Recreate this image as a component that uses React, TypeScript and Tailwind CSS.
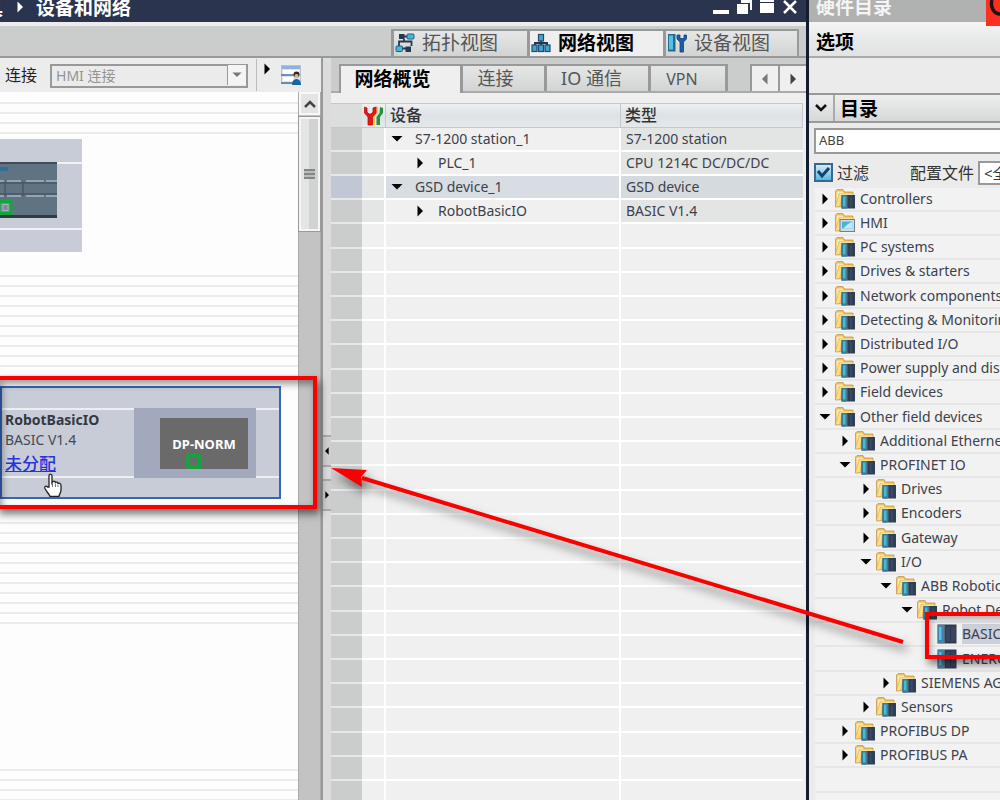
import React from "react";

type Kind = "folder" | "hmi" | "module";
type Node = { level: number; label: string; open?: boolean; kind?: Kind; selected?: boolean };

const INDENT = ["pl-0", "pl-[20px]", "pl-[41px]", "pl-[61px]", "pl-[82px]", "pl-[102px]"];

const TREE: Node[] = [
  { level: 0, label: "Controllers" },
  { level: 0, label: "HMI", kind: "hmi" },
  { level: 0, label: "PC systems" },
  { level: 0, label: "Drives & starters" },
  { level: 0, label: "Network components" },
  { level: 0, label: "Detecting & Monitoring" },
  { level: 0, label: "Distributed I/O" },
  { level: 0, label: "Power supply and distribution" },
  { level: 0, label: "Field devices" },
  { level: 0, label: "Other field devices", open: true },
  { level: 1, label: "Additional Ethernet devices" },
  { level: 1, label: "PROFINET IO", open: true },
  { level: 2, label: "Drives" },
  { level: 2, label: "Encoders" },
  { level: 2, label: "Gateway" },
  { level: 2, label: "I/O", open: true },
  { level: 3, label: "ABB Robotics", open: true },
  { level: 4, label: "Robot Device", open: true },
  { level: 5, label: "BASIC V1.4", kind: "module", selected: true },
  { level: 5, label: "ENERGY", kind: "module" },
  { level: 3, label: "SIEMENS AG" },
  { level: 2, label: "Sensors" },
  { level: 1, label: "PROFIBUS DP" },
  { level: 1, label: "PROFIBUS PA" },
];

const DEVICES = [
  { name: "S7-1200 station_1", type: "S7-1200 station", open: true, child: false, selected: false },
  { name: "PLC_1", type: "CPU 1214C DC/DC/DC", open: false, child: true, selected: false },
  { name: "GSD device_1", type: "GSD device", open: true, child: false, selected: true },
  { name: "RobotBasicIO", type: "BASIC V1.4", open: false, child: true, selected: false },
];

function Triangle({ open, className = "h-3 w-3" }: { open?: boolean; className?: string }) {
  return (
    <svg viewBox="0 0 12 12" className={"shrink-0 " + className} fill="currentColor" aria-hidden="true">
      {open ? <path d="M0.5 3h11L6 8.5z" /> : <path d="M3.5 0.5L9 6l-5.5 5.5z" />}
    </svg>
  );
}

function NodeIcon({ kind = "folder" }: { kind?: Kind }) {
  if (kind === "module") {
    return (
      <svg viewBox="0 0 20 20" className="h-5 w-5 shrink-0" aria-hidden="true">
        <rect x="0.5" y="0.5" width="19" height="19" fill="#2f3d52" />
        <rect x="1" y="1" width="5.5" height="18" fill="#4482a8" />
        <rect x="2" y="3" width="2.5" height="13" fill="#55c0ea" />
        <rect x="6.5" y="1" width="1" height="18" fill="#8595a5" />
        <rect x="9" y="3" width="9.5" height="14" fill="#38475c" />
        <rect x="13" y="3" width="1" height="14" fill="#2a374c" />
      </svg>
    );
  }
  return (
    <svg viewBox="0 0 20 20" className="h-5 w-5 shrink-0" aria-hidden="true">
      <path d="M0.5 2L2 0.5h6L9.5 3H18v14L0.5 18z" fill="#e9bf62" stroke="#c49a4c" strokeWidth="0.8" />
      <path d="M5 4.500h12.500V9H6l-1.500 8-3.500 0.500L4 7z" fill="#fbdf8c" />
      <path d="M1.500 2.500h6l1 1.500H4L1.500 12z" fill="#fdeab0" />
      {kind === "hmi" ? (
        <>
          <rect x="5" y="6.500" width="14.500" height="12" fill="#d3dbe2" stroke="#6e7f90" />
          <rect x="7" y="8.500" width="10.500" height="7" fill="#46b4dc" />
          <path d="M8 15.500l5-4.500 4.500-2.500v7z" fill="#bfeaf8" />
        </>
      ) : (
        <>
          <rect x="6.500" y="6" width="13.500" height="13.500" fill="#2f3f55" />
          <rect x="6.500" y="6" width="5" height="13.500" fill="#2f7f9c" />
          <rect x="8" y="7.500" width="2.500" height="10" fill="#45bcd8" />
          <rect x="11.500" y="6.500" width="0.800" height="12.500" fill="#7c90a3" />
          <rect x="15.500" y="8" width="0.800" height="10" fill="#4c5e74" />
        </>
      )}
    </svg>
  );
}

function TopologyIcon() {
  return (
    <svg viewBox="0 0 20 20" className="h-5 w-5 shrink-0" aria-hidden="true">
      <path d="M12 3.500H8M9 6v2.500h7.500V13M4 13V8.500h5M8 15.500h4" fill="none" stroke="#26384f" strokeWidth="1.800" />
      <rect x="4" y="1" width="5.500" height="5" fill="#26384f" />
      <rect x="12" y="1" width="7" height="5" rx="1" fill="#45b8e0" stroke="#2c5876" />
      <rect x="1" y="13" width="6.500" height="5.500" rx="1" fill="#45b8e0" stroke="#2c5876" />
      <rect x="10.500" y="13.500" width="5.500" height="5.500" fill="#26384f" />
    </svg>
  );
}

function NetworkIcon() {
  return (
    <svg viewBox="0 0 20 20" className="h-5 w-5 shrink-0" aria-hidden="true">
      <path d="M10 6v7M4 13v-3h12v3" fill="none" stroke="#233850" strokeWidth="2" />
      <g fill="#3fa6d2" stroke="#234a68" strokeWidth="1.200">
        <rect x="7.500" y="1.500" width="5" height="6.500" />
        <rect x="1" y="12" width="5" height="6.500" />
        <rect x="7.500" y="12" width="5" height="6.500" />
        <rect x="14" y="12" width="5" height="6.500" />
      </g>
    </svg>
  );
}

function DeviceIcon() {
  return (
    <svg viewBox="0 0 20 20" className="h-5 w-5 shrink-0" aria-hidden="true">
      <rect x="1" y="1" width="7.500" height="17.500" fill="#2b6a8c" />
      <rect x="2" y="2.500" width="4" height="14" fill="#4fc4e4" />
      <path d="M10 2v4l3 3v10h3.500V9L19.500 6V2h-2.500v3.500h-4V2z" fill="#1d5caa" stroke="#173f78" strokeWidth="0.800" />
    </svg>
  );
}

function ToolsIcon() {
  return (
    <svg viewBox="0 0 20 20" className="mx-auto h-5 w-5" aria-hidden="true">
      <path d="M11 1l3-0.500v6l-3 4v8.500H8.500V9z" fill="#f0c94a" />
      <path d="M16 1l3 1v5l-3 4v8h-3.500v-8l3-4z" fill="#23913f" />
      <path d="M0.500 1v6L4 11v8h4.500v-8l3.500-4V1L9 2v4L7 8H5L3 6V2z" fill="#e01818" stroke="#c01010" strokeWidth="0.800" />
    </svg>
  );
}

const viewTab = "flex h-[27px] w-[136px] items-center gap-[7px] border-t-2 border-l-3 border-[#999] pb-[2px] pl-px text-[19px] leading-6";
const subTab = "border-t-2 border-r-3 border-[#999] pb-[2px] text-[18px] leading-6";
const inactive = "bg-linear-to-b from-[#e6e6e6] via-[#dcdede] to-[#d2d4d4] text-[#555]";

function TitleBar() {
  return (
    <header className="flex h-[22px] shrink-0 items-start overflow-hidden bg-[#2a344e] text-white">
      <span className="-ml-4 text-[19px] leading-4 font-bold">具</span>
      <Triangle className="mt-px ml-[11px] h-3 w-3" />
      <h1 className="ml-[10px] flex-1 text-[19px] leading-4 font-bold">设备和网络</h1>
      <div className="flex items-center gap-[7px] pr-2">
        <button aria-label="最小化" className="flex h-4 w-4 items-end"><span className="mb-[2px] h-1 w-full bg-white" /></button>
        <button aria-label="还原">
          <svg viewBox="0 0 16 16" className="h-4 w-4" fill="white"><path d="M5 0h11v10h-2V3H5z" /><rect x="1" y="4" width="11" height="10" /></svg>
        </button>
        <button aria-label="最大化">
          <svg viewBox="0 0 16 16" className="h-4 w-4" fill="white"><rect x="1" y="0" width="14" height="2" /><rect x="1" y="3" width="14" height="10" /></svg>
        </button>
        <button aria-label="关闭">
          <svg viewBox="0 0 16 16" className="h-4 w-4" stroke="white" strokeWidth="2.500"><path d="M2 1l12 12M14 1L2 13" /></svg>
        </button>
      </div>
    </header>
  );
}

function ViewTabs() {
  return (
    <nav className="flex h-9 shrink-0 items-end justify-end border-t-4 border-b-2 border-t-[#ececec] border-b-[#999] bg-[#cbcdcc] pr-[7px]">
      <button className={viewTab + " " + inactive}><TopologyIcon />拓扑视图</button>
      <button className={viewTab + " bg-[#efefef] font-bold text-black"}><NetworkIcon />网络视图</button>
      <button className={viewTab + " border-r-2 " + inactive}><DeviceIcon />设备视图</button>
    </nav>
  );
}

function Lines({ className }: { className: string }) {
  return <div className={"shrink-0 bg-[repeating-linear-gradient(to_bottom,transparent_0_8px,#ebebeb_8px_10px)] " + className} />;
}

function Canvas() {
  return (
    <div className="relative flex min-w-0 flex-1 flex-col overflow-hidden bg-[#fdfdfd]">
      <Lines className="mt-[2px] h-10" />
      <Lines className="mt-[133px] h-[110px]" />
      <Lines className="mt-[137px] h-[112px]" />
      <Lines className="mt-[135px] h-20" />

      <section aria-label="PLC_1" className="absolute top-[47px] left-0 h-[113px] w-[82px] bg-[#c8ccd7]">
        <div className="mt-[23px] h-[68px] border-y-2 border-[#f0f2f4]">
          <svg viewBox="0 0 57 56" className="-mt-[2px] h-[56px] w-[57px]" aria-hidden="true">
            <rect width="57" height="56" fill="#5f7382" />
            <rect width="57" height="2" fill="#414c59" />
            <rect y="53" width="57" height="3" fill="#303a44" />
            <path d="M0 5h9l-2 4H0z" fill="#2f7190" />
            <path d="M0 19h4M7 19h14M26 19h18M46 19h11M0 34h4M7 34h14M26 34h18M46 34h11" stroke="#a8b5bf" strokeWidth="1.500" />
            <path d="M0 21h57M0 32h57M5 20v14M23 20v14" stroke="#4a5865" strokeWidth="1.500" />
            <rect x="-1" y="39.500" width="12" height="12" fill="#7b8994" stroke="#0fa83f" strokeWidth="3" />
            <rect x="3" y="42.500" width="5" height="6" fill="none" stroke="#a9b4bc" />
          </svg>
        </div>
      </section>

      <section aria-label="RobotBasicIO" className="absolute top-[294px] left-0 h-[113px] w-[281px] border-2 border-[#3566bd] bg-[#c8ccd7]">
        <div className="mt-5 flex h-[70px] border-y-2 border-[#eceef2]">
          <div className="w-[132px] pl-[3px] text-[14px] leading-5">
            <h2 className="font-bold text-[#333942]">RobotBasicIO</h2>
            <p className="text-[#444a55]">BASIC V1.4</p>
            <a href="#assign" className="block text-[17px] leading-7 font-medium text-[#2735d8] underline">未分配</a>
          </div>
          <div className="-mt-[2px] flex h-[70px] w-[122px] items-center justify-end bg-[#a2a9bd] pr-2">
            <div className="flex h-[51px] w-[88px] flex-col items-center bg-[#6a6a6a] pt-4">
              <span className="text-[13px] leading-5 font-bold text-white">DP-NORM</span>
              <span className="mr-5 h-4 w-4 rounded-sm border-4 border-[#12a53d]" />
            </div>
          </div>
        </div>
      </section>

      <svg viewBox="0 0 20 24" className="absolute top-[381px] left-[43px] h-6 w-5" aria-hidden="true">
        <path d="M6 14V3c0-2.500 3-2.500 3 0v7l1-1.500c1-.8 2.500 0 2.500 1 1-.8 2.500-.3 2.500 1 1.300-.6 3 0 3 2v5c0 2-1.500 3-2 6H7c-.5-2-3-4-5-8-1-2.500 1.500-3 2.500-1.500z" fill="white" stroke="#222" strokeWidth="1.300" />
        <path d="M9.500 10v4M12.500 11v3M15 12v2" stroke="#777" />
      </svg>
    </div>
  );
}

function ScrollBar() {
  return (
    <div className="flex w-[23px] shrink-0 flex-col border-x border-[#aaa] bg-[#c3c3c3]">
      <button aria-label="向上滚动" className="flex h-[23px] items-center justify-center border-2 border-[#f8f8f8] bg-[#e4e4e4]">
        <svg viewBox="0 0 12 8" className="h-2 w-3" fill="none" stroke="#444" strokeWidth="2.500"><path d="M1 7l5-5 5 5" /></svg>
      </button>
      <div className="mt-[2px] flex h-[114px] items-center justify-center border-2 border-[#f5f5f5] bg-linear-to-r from-[#e4e5e5] from-50% to-[#d1d3d3] to-50% outline outline-[#999]">
        <div className="h-[10px] w-[11px] bg-[repeating-linear-gradient(to_bottom,#858585_0_2px,#bcbcbc_2px_4px)]" />
      </div>
    </div>
  );
}

function NetworkPane() {
  return (
    <section className="flex w-[321px] shrink-0 flex-col">
      <div className="flex h-[34px] shrink-0 items-center bg-[#ececec] pl-[5px]">
        <label htmlFor="connection" className="text-[16px] leading-6 text-[#222]">连接</label>
        <div className="relative ml-[13px] h-6 w-[198px]">
          <select id="connection" disabled className="h-6 w-full appearance-none border-2 border-[#999] bg-[#ebebeb] pl-1 text-[14px] leading-5 text-[#949494] opacity-100">
            <option>HMI 连接</option>
          </select>
          <span className="pointer-events-none absolute inset-y-[2px] right-[2px] flex w-[19px] items-center justify-center border-l border-[#999] bg-[#f4f4f4] text-[#777]">
            <Triangle open className="h-[10px] w-[10px]" />
          </span>
        </div>
        <div className="ml-2 h-8 w-px bg-[#bbb]" />
        <Triangle className="mb-3 ml-1 h-3 w-3" />
        <button aria-label="显示概览" className="ml-2">
          <svg viewBox="0 0 20 20" className="h-5 w-5">
            <rect x="0.500" y="0.500" width="19" height="18" fill="#dce5ef" stroke="#b4c3d4" />
            <rect x="1" y="1" width="18" height="3" fill="#8fb0d8" />
            <rect x="2" y="5" width="16" height="4" fill="#fff" />
            <rect x="2" y="12" width="10" height="4" fill="#fff" />
            <path d="M0 10h13M0 18h13" stroke="#5271a0" strokeWidth="1.500" />
            <circle cx="15.500" cy="9.500" r="3" fill="#32281e" />
            <circle cx="15.500" cy="11" r="2" fill="#e3b184" />
            <path d="M11 20c0-8 9-8 9 0z" fill="#17669f" />
          </svg>
        </button>
      </div>
      <div className="flex min-h-0 flex-1">
        <Canvas />
        <ScrollBar />
      </div>
    </section>
  );
}

function Splitter() {
  return (
    <div className="flex w-[10px] shrink-0 flex-col items-center border-l-2 border-[#999] bg-[#dcdcdc] pt-[377px]">
      <button aria-label="向左折叠" className="flex h-8 w-full items-center justify-center border-y-2 border-[#aaa] bg-[#d0d0d0]">
        <Triangle className="h-2 w-2 rotate-180" />
      </button>
      <button aria-label="向右折叠" className="mt-3 flex h-8 w-full items-center justify-center border-y-2 border-[#aaa] bg-[#d0d0d0]">
        <Triangle className="h-2 w-2" />
      </button>
    </div>
  );
}

function OverviewPane() {
  return (
    <section className="flex min-w-0 flex-1 flex-col overflow-hidden bg-[#efefef]">
      <nav className="flex h-[35px] shrink-0 items-end border-b-2 border-[#aaa] bg-[#cbcdcc] pl-2">
        <button className={subTab + " -mb-[2px] h-[29px] w-[124px] border-l-2 bg-[#efefef] pr-4 font-bold text-black"}><span className="text-[19px]">网络概览</span></button>
        <button className={subTab + " h-[27px] w-[84px] pr-4 " + inactive}>连接</button>
        <button className={subTab + " h-[27px] w-[104px] pr-3 " + inactive}>IO 通信</button>
        <button className={subTab + " h-[27px] w-[77px] pr-3 " + inactive}><span className="text-[16px]">VPN</span></button>
        <div className="flex-1" />
        <button aria-label="上一个选项卡" className="flex h-[27px] w-7 items-center justify-center border-t-2 border-l-2 border-[#999] bg-[#efefef] text-[#777]"><Triangle className="h-3 w-3 rotate-180" /></button>
        <button aria-label="下一个选项卡" className="flex h-[27px] w-7 items-center justify-center border-t-2 border-l-2 border-[#999] bg-[#efefef] text-[#444]"><Triangle /></button>
      </nav>
      <div className="mt-[10px] pr-[3px]">
        <table className="w-full table-fixed border-separate border-spacing-0 text-left text-[14px] text-[#3c414c]">
          <colgroup>
            <col className="w-[31px]" />
            <col className="w-6" />
            <col className="w-[235px]" />
            <col />
          </colgroup>
          <thead>
            <tr className="h-[25px] bg-linear-to-b from-[#f0f1f2] via-[#dde2e7] to-[#e5e9ec]">
              <th aria-label="行" className="border-y border-[#c4c8cc] bg-[#dcdede]" />
              <th aria-label="状态" className="border-y border-r border-[#c4c8cc] p-0"><ToolsIcon /></th>
              <th className="border-y border-r border-[#c4c8cc] p-0 pb-[2px] pl-1 text-[16px] leading-5 font-medium text-[#333]">设备</th>
              <th className="border-y border-r border-[#c4c8cc] p-0 pb-[2px] pl-1 text-[16px] leading-5 font-medium text-[#333]">类型</th>
            </tr>
          </thead>
          <tbody>
            {DEVICES.map((d) => (
              <tr key={d.name} className="h-6">
                <td className={"border-b-2 border-[#e6e8e8] p-0 " + (d.selected ? "bg-[#c1c7d4]" : "bg-[#cbcdcc]")} />
                <td className="border-r-2 border-b-2 border-white bg-[#e4e6e5] p-0" />
                <td className={"border-r-2 border-b-2 border-white p-0 leading-5 " + (d.selected ? "bg-[#d8dde3]" : "bg-[#f0f0f0]")}>
                  <div className={"flex items-center gap-3 " + (d.child ? "pl-7" : "pl-[5px]")}>
                    <button aria-label={d.open ? "折叠" : "展开"} className="text-black"><Triangle open={d.open} /></button>
                    {d.name}
                  </div>
                </td>
                <td className={"border-b-2 border-white p-0 pl-[5px] leading-5 " + (d.selected ? "bg-[#d5dade]" : "bg-[#e3e5e4]")}>{d.type}</td>
              </tr>
            ))}
            {Array.from({ length: 26 }, (_, i) => (
              <tr key={i} className="h-6 nth-[5n]:h-[25px]">
                <td className="border-b-2 border-[#e6e8e8] bg-[#cbcdcc] p-0" />
                <td className="border-r-2 border-b-2 border-white bg-[#f0f0f0] p-0" />
                <td className="border-r-2 border-b-2 border-white bg-[#f0f0f0] p-0" />
                <td className="border-b-2 border-white bg-[#f0f0f0] p-0" />
              </tr>
            ))}
          </tbody>
        </table>
      </div>
    </section>
  );
}

function Catalog() {
  return (
    <aside className="relative flex w-[191px] shrink-0 flex-col overflow-hidden bg-[#ebebeb]">
      <header className="h-[22px] shrink-0 overflow-hidden bg-[#b0b2b1] pl-[7px]">
        <h2 className="-mt-[3px] text-[19px] leading-5 font-bold text-[#f4f4f4]">硬件目录</h2>
      </header>
      <svg viewBox="0 0 14 26" className="absolute top-0 right-0 h-[26px] w-[14px]" aria-hidden="true">
        <rect width="14" height="26" fill="#fa3020" />
        <path d="M6 0C4 7 8 14 14 14" fill="none" stroke="#1c1416" strokeWidth="3.500" />
      </svg>
      <h3 className="h-9 shrink-0 border-b-2 border-[#aaa] bg-linear-to-b from-[#f5f5f5] via-[#e8e9e9] to-[#e2e4e4] pl-[7px] text-[19px] leading-10 font-bold text-black">选项</h3>
      <div className="h-[37px] shrink-0 border-b-2 border-[#999]" />
      <div className="flex h-7 shrink-0 items-center border-b-2 border-[#999] bg-linear-to-b from-[#eee] to-[#d6d8d8]">
        <button aria-label="折叠目录" className="flex h-full w-[26px] items-center justify-center border-r-2 border-[#aaa]">
          <svg viewBox="0 0 12 8" className="h-2 w-3" fill="none" stroke="#111" strokeWidth="2.500"><path d="M1 1l5 5 5-5" /></svg>
        </button>
        <h3 className="pt-[2px] pl-[5px] text-[19px] leading-6 font-bold text-black">目录</h3>
      </div>
      <div className="shrink-0 pt-1 pl-[5px]">
        <input aria-label="搜索" defaultValue="ABB" className="h-[26px] w-[240px] border-2 border-[#999] bg-white pb-[2px] pl-[3px] text-[13px] leading-5 text-[#444]" />
      </div>
      <div className="flex h-[34px] shrink-0 items-center pt-[3px] pl-[5px] text-[16px] leading-6 whitespace-nowrap text-[#333]">
        <span className="relative h-[19px] w-[19px] shrink-0">
          <input id="filter" type="checkbox" defaultChecked className="h-[19px] w-[19px] appearance-none border-2 border-[#36698b] bg-linear-to-b from-[#d5e8f2] to-[#4db9df]" />
          <svg viewBox="0 0 19 19" className="pointer-events-none absolute inset-0" fill="none" stroke="#123f75" strokeWidth="3"><path d="M4 8l4 5 7-8" /></svg>
        </span>
        <label htmlFor="filter" className="ml-1">过滤</label>
        <label htmlFor="profile" className="ml-[41px]">配置文件</label>
        <select id="profile" className="ml-1 h-6 w-[90px] shrink-0 appearance-none border-2 border-[#999] bg-white pl-1 text-[15px] leading-5">
          <option>&lt;全部&gt;</option>
        </select>
      </div>
      <ul className="min-h-0 flex-1 overflow-hidden pl-[6px] text-[14px] text-[#3c414c]">
        {TREE.map((n) => (
          <li key={n.label + n.level} className={"flex h-6 items-center border-b-2 border-[#e6e6e6] bg-[#f2f2f2] whitespace-nowrap nth-[5n]:h-[25px] " + INDENT[n.level]}>
            {n.kind === "module" ? (
              <span className="w-5 shrink-0" />
            ) : (
              <button aria-label={n.open ? "折叠" : "展开"} className="flex w-5 shrink-0 justify-center text-black"><Triangle open={n.open} /></button>
            )}
            <NodeIcon kind={n.kind} />
            <span className={"ml-[5px] flex-1 leading-5 " + (n.selected ? "bg-[#cbd0da]" : "")}>{n.label}</span>
          </li>
        ))}
        <li className="h-[25px] border-b-2 border-[#e6e6e6] bg-[#f2f2f2]" />
        <li className="h-6 border-b-2 border-[#e6e6e6] bg-[#f2f2f2]" />
      </ul>
    </aside>
  );
}

function Annotations() {
  return (
    <div className="pointer-events-none absolute inset-0 overflow-hidden">
      <div className="absolute top-[376px] -left-1 h-[133px] w-[321px] border-4 border-[#fb0000] shadow-[3px_5px_8px_rgba(0,0,0,0.55),inset_2px_4px_7px_rgba(0,0,0,0.4)]" />
      <div className="absolute top-[612px] left-[925px] h-[47px] w-[100px] border-4 border-[#fb0000] shadow-[3px_5px_8px_rgba(0,0,0,0.5),inset_2px_3px_6px_rgba(0,0,0,0.3)]" />
      <svg viewBox="0 0 1000 800" className="absolute top-0 left-0 h-[800px] w-[1000px] drop-shadow-[4px_7px_5px_rgba(0,0,0,0.5)]" aria-hidden="true">
        <path d="M362 478L903 642" stroke="#fb0000" strokeWidth="4" />
        <path d="M331 468L367 470L361 477L362 487Z" fill="#fb0000" />
      </svg>
    </div>
  );
}

export default function App() {
  return (
    <div className="relative flex h-screen overflow-hidden bg-[#ececec] font-['Noto_Sans','Noto_Sans_CJK_SC',sans-serif]">
      <main className="flex min-w-0 flex-1 flex-col">
        <TitleBar />
        <ViewTabs />
        <div className="flex min-h-0 flex-1">
          <NetworkPane />
          <Splitter />
          <OverviewPane />
        </div>
      </main>
      <div className="w-[3px] shrink-0 bg-[#141c30]" />
      <Catalog />
      <Annotations />
    </div>
  );
}
